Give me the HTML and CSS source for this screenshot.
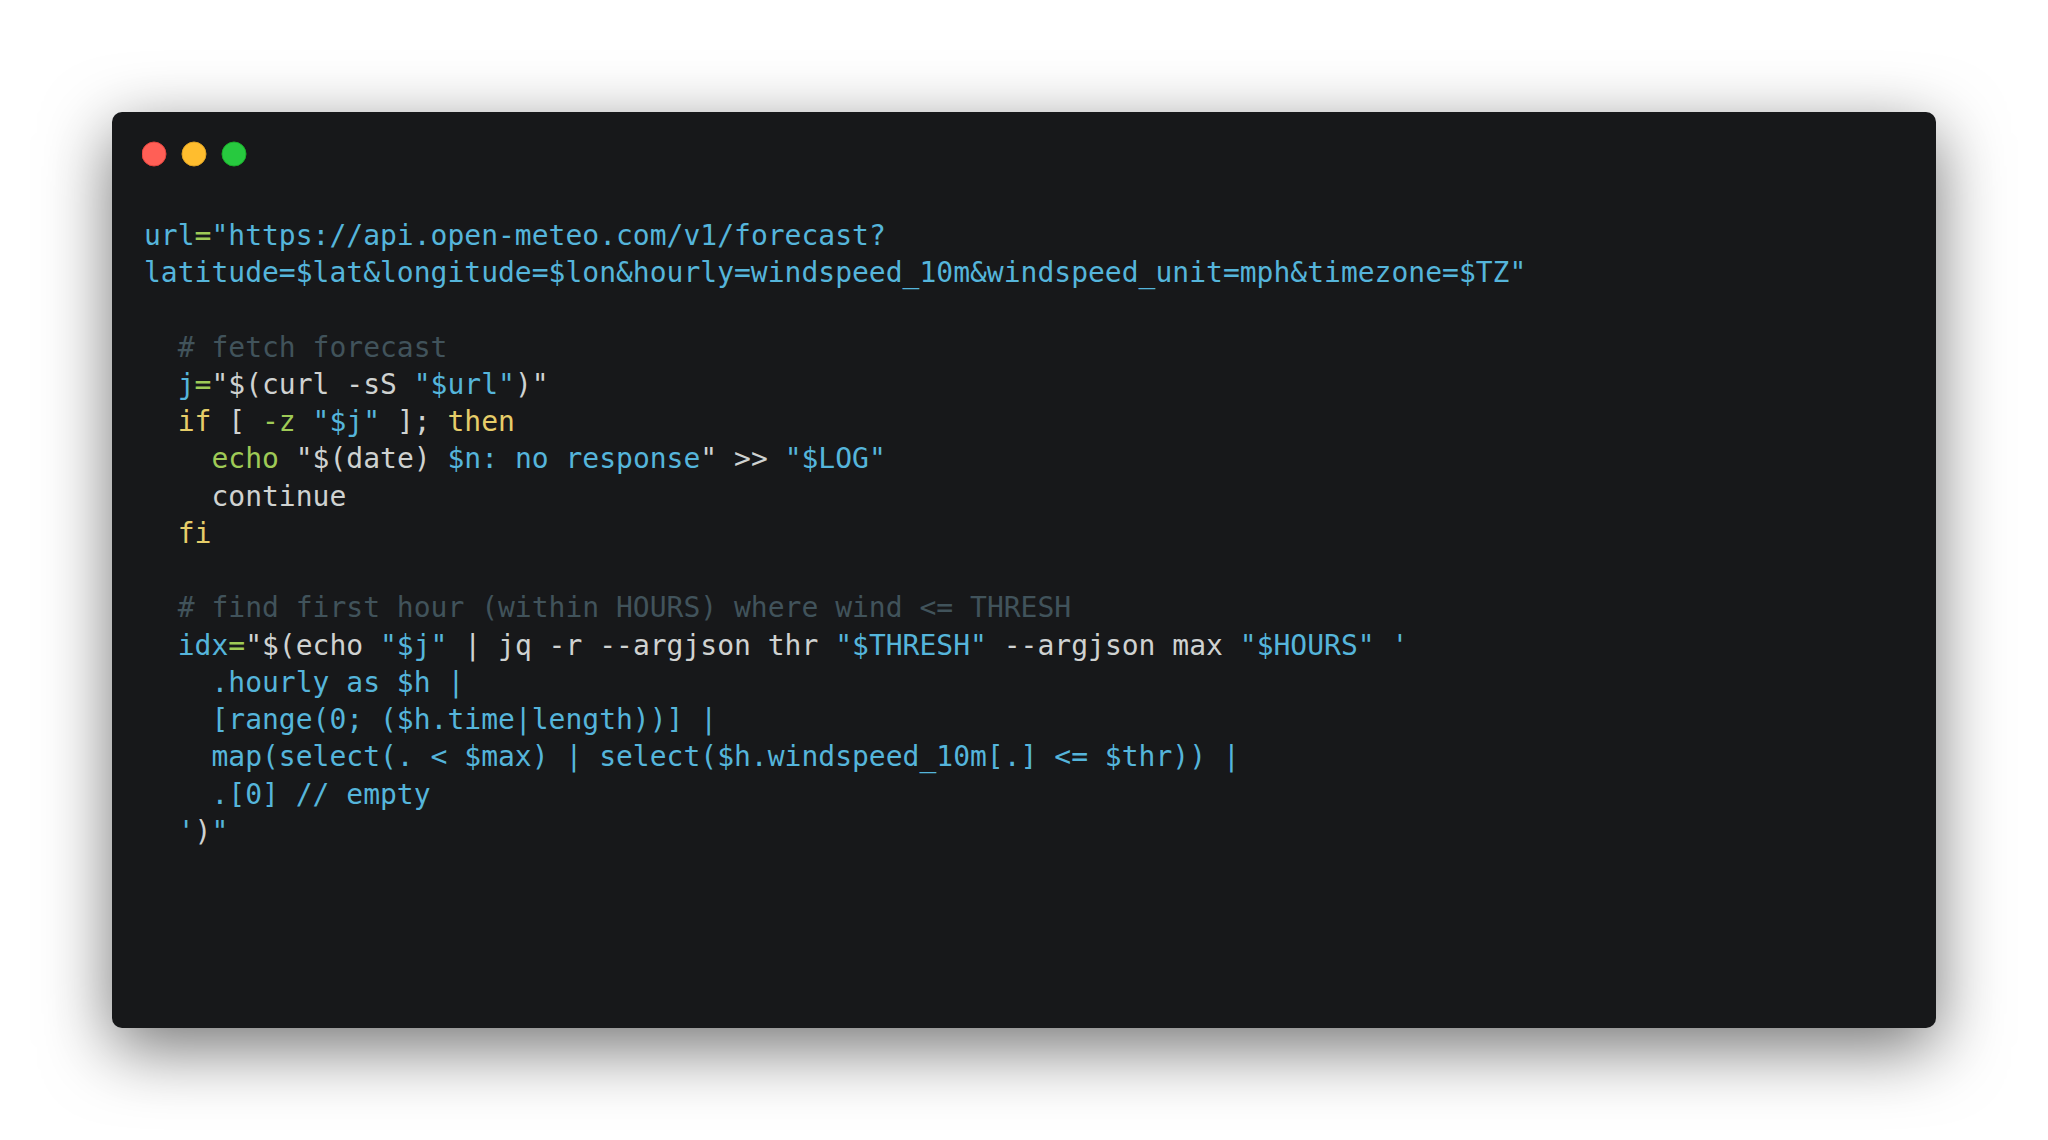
FILE: index.html
```html
<!DOCTYPE html>
<html lang="en">
<head>
<meta charset="utf-8">
<title>Code snippet</title>
<link rel="stylesheet" href="styles.css">
</head>
<body>
<div class="stage">
  <div class="window">
    <div class="header">
      <svg class="controls" width="108" height="28" viewBox="0 0 108 28" xmlns="http://www.w3.org/2000/svg">
        <circle cx="12" cy="14" r="12" fill="#FF5F56" stroke="#E0443E" stroke-width="1"/>
        <circle cx="52" cy="14" r="12" fill="#FFBD2E" stroke="#DEA123" stroke-width="1"/>
        <circle cx="92" cy="14" r="12" fill="#27C93F" stroke="#1AAB29" stroke-width="1"/>
      </svg>
    </div>
<pre class="code"><span class="b">url</span><span class="g">=</span><span class="b">"https://api.open-meteo.com/v1/forecast?</span>
<span class="b">latitude=$lat&amp;longitude=$lon&amp;hourly=windspeed_10m&amp;windspeed_unit=mph&amp;timezone=$TZ"</span>

  <span class="cm"># fetch forecast</span>
  <span class="b">j</span><span class="g">=</span>"$(curl -sS <span class="b">"$url"</span>)"
  <span class="y">if</span> [ <span class="g">-z</span> <span class="b">"$j"</span> ]; <span class="y">then</span>
    <span class="g">echo</span> "$(date) <span class="b">$n: no response</span>" &gt;&gt; <span class="b">"$LOG"</span>
    continue
  <span class="y">fi</span>

  <span class="cm"># find first hour (within HOURS) where wind &lt;= THRESH</span>
  <span class="b">idx</span><span class="g">=</span>"$(echo <span class="b">"$j"</span> | jq -r --argjson thr <span class="b">"$THRESH"</span> --argjson max <span class="b">"$HOURS"</span> <span class="b">'
    .hourly as $h |
    [range(0; ($h.time|length))] |
    map(select(. &lt; $max) | select($h.windspeed_10m[.] &lt;= $thr)) |
    .[0] // empty
  '</span>)<span class="b">"</span></pre>
  </div>
</div>
</body>
</html>
```
FILE: styles.css
```css
html, body {
  margin: 0;
  padding: 0;
  background: #ffffff;
}

.stage {
  width: 2048px;
  height: 1140px;
  padding: 112px;
  box-sizing: border-box;
  display: flex;
}

.window {
  flex: 1;
  background: #17181a;
  border-radius: 10px;
  box-shadow: 0 20px 68px rgba(0, 0, 0, 0.55);
  display: flex;
  flex-direction: column;
}

.header {
  padding: 28px 30px 0;
  height: 28px;
}

.controls {
  display: block;
}

.code {
  margin: 49px 0 0;
  padding: 0 32px;
  font-family: "DejaVu Sans Mono", monospace;
  font-size: 28px;
  line-height: 1.33;
  color: #cfd2d1;
}

.b { color: #55b5db; }
.g { color: #9fca56; }
.y { color: #e6cd69; }
.cm { color: #41535b; }
```
